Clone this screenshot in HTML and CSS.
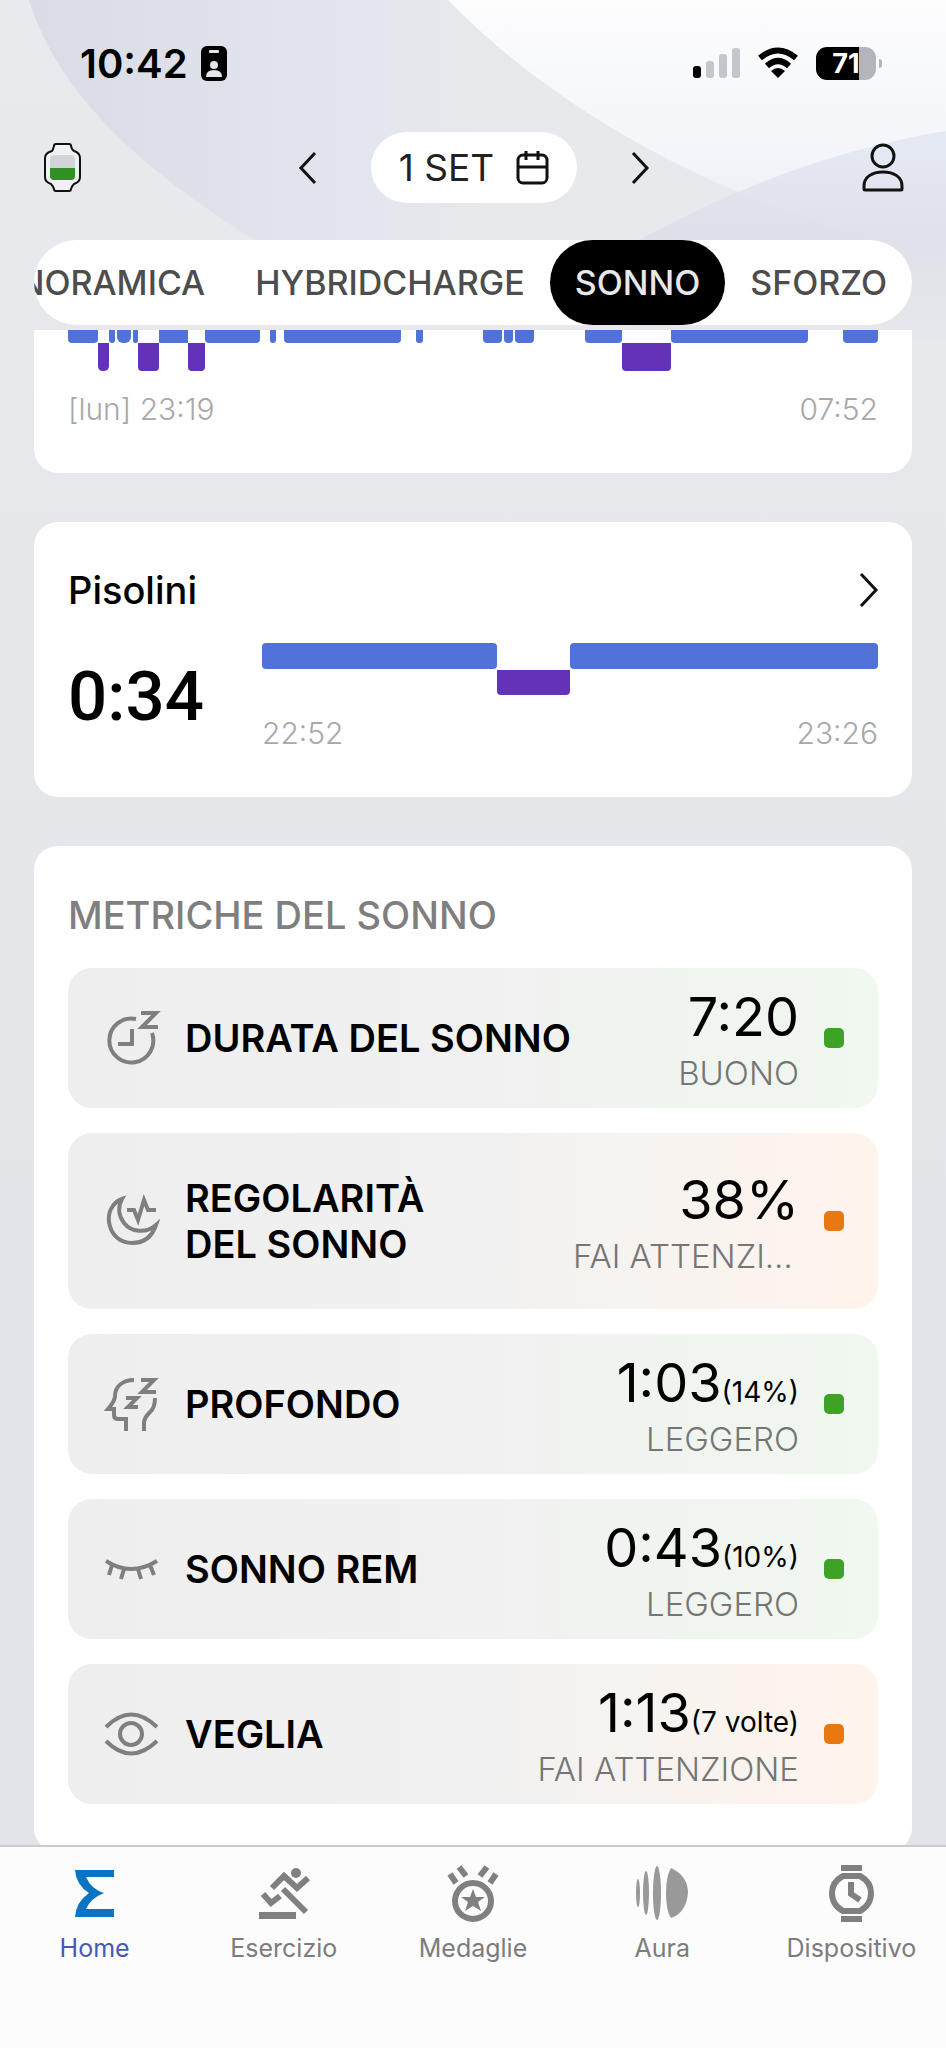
FILE: index.html
```html
<!DOCTYPE html>
<html lang="it">
<head>
    <meta charset="utf-8">
    <meta name="viewport" content="width=device-width, initial-scale=1">
    <title>Sonno</title>
    <link rel="stylesheet" href="styles.css">
</head>
<body>
<div class="app">

    <!-- Background curves -->
    <svg class="backdrop" viewBox="0 0 946 340" preserveAspectRatio="none" aria-hidden="true">
        <defs>
            <linearGradient id="fade-left" x1="0" x2="1" y1="0" y2="0">
                <stop offset="0" stop-color="#d9dce4"/>
                <stop offset="0.55" stop-color="#e3e6ee"/>
                <stop offset="0.75" stop-color="#e7e8ec"/>
                <stop offset="1" stop-color="#e8e9ec"/>
            </linearGradient>
            <linearGradient id="fade-top" x1="0" x2="0" y1="0" y2="1">
                <stop offset="0" stop-color="#fdfdfe"/>
                <stop offset="0.6" stop-color="#f3f5fa"/>
                <stop offset="1" stop-color="#e6e9f1"/>
            </linearGradient>
            <linearGradient id="fade-right" x1="0" x2="0" y1="0" y2="1">
                <stop offset="0" stop-color="#dfe4f0" stop-opacity="0.7"/>
                <stop offset="0.5" stop-color="#dcdfe8" stop-opacity="0.8"/>
                <stop offset="1" stop-color="#e6e7ec" stop-opacity="0.6"/>
            </linearGradient>
        </defs>
        <path fill="url(#fade-left)" d="M29 0C60 100 150 175 262 245H620V0Z"/>
        <path fill="url(#fade-top)" d="M448 0C560 115 730 210 946 258V0Z"/>
        <path fill="url(#fade-right)" d="M630 245C730 190 830 150 946 131V340H630Z"/>
    </svg>

    <header>
        <div class="status">
            <span class="clock">10:42</span>
            <svg width="26" height="35" viewBox="0 0 26 35" aria-hidden="true">
                <rect width="26" height="35" rx="6"/>
                <rect x="8" y="4" width="10" height="3" rx="1" fill="#e4e6ec"/>
                <circle cx="13" cy="19" r="4" fill="#e4e6ec"/>
                <path d="M5 31Q5 24 13 24Q21 24 21 31Z" fill="#e4e6ec"/>
            </svg>
            <div class="status-right">
                <svg width="47" height="30" viewBox="0 0 47 30" fill="#c5c6cb" aria-hidden="true">
                    <rect y="18" width="8" height="12" rx="3" fill="#000"/>
                    <rect x="13" y="13" width="8" height="17" rx="3"/>
                    <rect x="26" y="6" width="8" height="24" rx="3"/>
                    <rect x="39" width="8" height="30" rx="3"/>
                </svg>
                <svg width="40" height="30" viewBox="0 0 40 30" aria-hidden="true">
                    <path d="M2 10Q20 -5 38 10M9 18Q20 8 31 18" fill="none" stroke="#000" stroke-width="6"/>
                    <path d="M20 30L13 23Q20 17 27 23Z"/>
                </svg>
                <span class="battery">71</span>
            </div>
        </div>

        <div class="topbar">
            <button class="icon-btn" aria-label="Batteria orologio">
                <svg width="37" height="49" viewBox="0 0 37 49">
                    <path d="M8 8Q9 7 10 3Q10 1 12 1H25Q27 1 27 3Q28 7 30 8Q36 10 36 15V34Q36 39 30 41Q28 43 27 46Q27 48 25 48H12Q10 48 10 46Q9 43 7 41Q1 39 1 34V15Q1 10 8 8Z" fill="#f0f1f4" stroke="#111" stroke-width="2"/>
                    <path d="M6 25V16Q6 12 10 12H27Q31 12 31 16V25Z" fill="#d3d4da"/>
                    <path d="M6 25H31V33Q31 37 27 37H10Q6 37 6 33Z" fill="#2f9220"/>
                </svg>
            </button>
            <div class="date-nav">
                <button class="icon-btn" aria-label="Giorno precedente">
                    <svg width="17" height="32" viewBox="0 0 17 32"><path class="line" d="M16 1L2 16L16 31"/></svg>
                </button>
                <button class="date">1 SET
                    <svg width="33" height="33" viewBox="0 0 33 33" aria-hidden="true">
                        <rect class="line" x="2" y="4" width="29" height="28" rx="5"/>
                        <path class="line" d="M2 16H31M10 0V9M22 0V9"/>
                    </svg>
                </button>
                <button class="icon-btn" aria-label="Giorno successivo">
                    <svg width="17" height="32" viewBox="0 0 17 32"><path class="line" d="M1 1L15 16L1 31"/></svg>
                </button>
            </div>
            <button class="icon-btn profile" aria-label="Profilo">
                <svg width="42" height="48" viewBox="0 0 42 48">
                    <circle class="line" cx="21" cy="12" r="11"/>
                    <path class="line" d="M2 45V42C2 33 10 28 21 28S40 33 40 42V45Q40 46 39 46H3Q2 46 2 45Z"/>
                </svg>
            </button>
        </div>

        <nav class="tabs">
            <button>PANORAMICA</button>
            <button>HYBRIDCHARGE</button>
            <button class="active">SONNO</button>
            <button>SFORZO</button>
        </nav>
    </header>

    <main>
        <!-- Night chart, scrolled half out of view -->
        <section class="card night">
            <svg class="chart" height="41" viewBox="0 0 810 41" preserveAspectRatio="none" aria-hidden="true">
                <g class="light">
                    <rect x="0" y="-14" width="30" height="27" rx="4"/>
                    <rect x="41" y="-14" width="6" height="27" rx="3"/>
                    <rect x="49" y="-14" width="14" height="27" rx="6"/>
                    <rect x="65" y="-14" width="5" height="27" rx="2"/>
                    <rect x="91" y="-14" width="29" height="27" rx="1"/>
                    <rect x="137" y="-14" width="55" height="27" rx="4"/>
                    <rect x="202" y="-14" width="6" height="27" rx="3"/>
                    <rect x="216" y="-14" width="117" height="27" rx="4"/>
                    <rect x="348" y="-14" width="7" height="27" rx="3"/>
                    <rect x="415" y="-14" width="19" height="27" rx="4"/>
                    <rect x="436" y="-14" width="9" height="27" rx="4"/>
                    <rect x="447" y="-14" width="19" height="27" rx="4"/>
                    <rect x="517" y="-14" width="37" height="27" rx="4"/>
                    <rect x="603" y="-14" width="137" height="27" rx="4"/>
                    <rect x="775" y="-14" width="35" height="27" rx="4"/>
                </g>
                <g class="deep">
                    <path d="M30 13H41V36Q41 41 35 41Q30 41 30 36Z"/>
                    <path d="M70 13H91V37Q91 41 87 41H74Q70 41 70 37Z"/>
                    <path d="M120 13H137V37Q137 41 133 41H124Q120 41 120 37Z"/>
                    <path d="M554 13H603V37Q603 41 599 41H558Q554 41 554 37Z"/>
                </g>
            </svg>
            <div class="times"><span>[lun] 23:19</span><span>07:52</span></div>
        </section>

        <section class="card naps">
            <div class="card-head">
                <h2>Pisolini</h2>
                <button class="icon-btn" aria-label="Apri pisolini">
                    <svg width="19" height="34" viewBox="0 0 19 34"><path class="line" d="M2 1L17 17L2 33"/></svg>
                </button>
            </div>
            <div class="nap">
                <span class="nap-total">0:34</span>
                <div class="nap-chart">
                    <svg class="chart" height="52" viewBox="0 0 616 52" preserveAspectRatio="none" aria-hidden="true">
                        <g class="light">
                            <rect width="235" height="26" rx="4"/>
                            <rect x="308" width="308" height="26" rx="4"/>
                        </g>
                        <path class="deep" d="M235 27H308V48Q308 52 304 52H239Q235 52 235 48Z"/>
                    </svg>
                    <div class="times"><span>22:52</span><span>23:26</span></div>
                </div>
            </div>
        </section>

        <section class="card metrics">
            <h2>METRICHE DEL SONNO</h2>
            <ul>
                <li class="good">
                    <svg width="52" height="54" viewBox="0 0 52 54" aria-hidden="true">
                        <path d="M30 8A22 22 0 1 0 46 22M26 18V33H12M35 2H50L36 16H52"/>
                    </svg>
                    <span class="name">DURATA DEL SONNO</span>
                    <span class="result"><span class="value">7:20</span><span class="level">BUONO</span></span>
                    <i></i>
                </li>
                <li class="warn tall">
                    <svg width="52" height="54" viewBox="0 0 52 54" aria-hidden="true">
                        <path d="M16 5C5 9 2 20 3 28C5 42 15 49 26 49C38 49 46 43 50 31C40 40 25 38 18 29C12 21 12 12 16 5ZM21 16H28L32 26L38 6L42 16H50"/>
                    </svg>
                    <span class="name">REGOLARITÀ<br>DEL SONNO</span>
                    <span class="result"><span class="value">38%</span><span class="level">FAI ATTENZIONE</span></span>
                    <i></i>
                </li>
                <li class="good">
                    <svg width="52" height="54" viewBox="0 0 52 54" aria-hidden="true">
                        <path d="M28 3C16 3 9 10 9 19Q9 24 2 32H8V38Q8 42 12 42H20V54M49 21Q49 31 44 35Q38 41 38 46V54M35 3H48L36 15H50M20 21H31L22 30H32"/>
                    </svg>
                    <span class="name">PROFONDO</span>
                    <span class="result"><span class="value">1:03<small>(14%)</small></span><span class="level">LEGGERO</span></span>
                    <i></i>
                </li>
                <li class="good">
                    <svg width="52" height="54" viewBox="0 0 52 54" aria-hidden="true">
                        <path d="M0 19Q25 35 51 19M6 23L3 33M18 27L15 37M32 27L35 37M44 23L48 33"/>
                    </svg>
                    <span class="name">SONNO REM</span>
                    <span class="result"><span class="value">0:43<small>(10%)</small></span><span class="level">LEGGERO</span></span>
                    <i></i>
                </li>
                <li class="warn">
                    <svg width="52" height="54" viewBox="0 0 52 54" aria-hidden="true">
                        <path d="M0 20Q25 -5 51 20M0 34Q25 59 51 34"/>
                        <circle cx="25" cy="27" r="11"/>
                    </svg>
                    <span class="name">VEGLIA</span>
                    <span class="result"><span class="value">1:13<small>(7 volte)</small></span><span class="level">FAI ATTENZIONE</span></span>
                    <i></i>
                </li>
            </ul>
        </section>
    </main>

    <nav class="bottom-nav">
        <a href="#" class="active">
            <svg width="39" height="57" viewBox="0 -5 39 57" aria-hidden="true">
                <path fill="#0a74c4" d="M0 0H39V7H11Q16 19 29 23Q16 28 11 39H39V47H0Q1 32 14 23Q1 15 0 0Z"/>
            </svg>
            Home
        </a>
        <a href="#">
            <svg width="50" height="57" viewBox="0 -3 50 57" aria-hidden="true">
                <circle cx="37" cy="5" r="5" fill="#808080"/>
                <path d="M13 20L25 8L38 20L49 10M24 21L47 44M4 26L12 35L21 28" fill="none" stroke="#808080" stroke-width="6"/>
                <rect y="44" width="37" height="7" fill="#808080"/>
            </svg>
            Esercizio
        </a>
        <a href="#">
            <svg width="52" height="57" viewBox="-1 0 52 57" aria-hidden="true">
                <path d="M2 9L8 18M11 2L18 11M48 9L42 18M39 2L32 11" stroke="#808080" stroke-width="6"/>
                <circle cx="25" cy="36" r="18" fill="none" stroke="#808080" stroke-width="6"/>
                <path d="M25 24L28 32H37L30 37L33 46L25 41L17 46L20 37L13 32H22Z" fill="#808080"/>
            </svg>
            Medaglie
        </a>
        <a href="#">
            <svg width="52" height="57" viewBox="0 -2 52 57" fill="#999" aria-hidden="true">
                <ellipse cx="2" cy="26" rx="2" ry="14"/>
                <ellipse cx="10" cy="26" rx="3" ry="22"/>
                <ellipse cx="21" cy="26" rx="4" ry="27"/>
                <path d="M35 1Q52 9 52 26Q50 46 35 51Q30 44 30 26Q30 9 35 1Z"/>
            </svg>
            Aura
        </a>
        <a href="#">
            <svg width="45" height="57" viewBox="0 0 45 57" aria-hidden="true">
                <path d="M12 0H33V6H12ZM12 51H33V57H12Z" fill="#808080"/>
                <path d="M14 11H31Q42 17 42 28Q42 40 31 46H14Q3 40 3 28Q3 17 14 11Z M22 17V29L31 35" fill="none" stroke="#808080" stroke-width="6"/>
            </svg>
            Dispositivo
        </a>
    </nav>

</div>
</body>
</html>
```
FILE: styles.css
```css
* { box-sizing: border-box; }
body { margin: 0; font-family: Inter, sans-serif; color: #000; background: #e6e7eb; }
button { font: inherit; color: inherit; background: none; border: 0; padding: 0; cursor: pointer; }
h2, ul { margin: 0; padding: 0; }
svg { display: block; flex: none; overflow: visible; }

.app {
    position: relative;
    display: flex;
    flex-direction: column;
    height: 100vh;
    overflow: hidden;
    background: linear-gradient(#e9eaee, #e6e7eb 30%, #e2e3e9);
}
.backdrop { position: absolute; top: 0; left: 0; width: 100%; height: 340px; }
header { position: relative; }
.line { fill: none; stroke: #111; stroke-width: 3; }

/* Status bar */
.status { display: flex; align-items: center; gap: 13px; height: 88px; padding: 38px 64px 0 80px; }
.clock { font-size: 40px; font-weight: 600; }
.status-right { display: flex; align-items: center; gap: 18px; margin-left: auto; }
.battery {
    position: relative;
    width: 60px;
    margin-right: 6px;
    border-radius: 11px;
    background: linear-gradient(90deg, #000 71%, #b4b5ba 71%);
    color: #fff;
    font-size: 27px;
    font-weight: 700;
    line-height: 33px;
    text-align: center;
}
.battery::after {
    content: "";
    position: absolute;
    top: 12px;
    right: -6px;
    width: 3px;
    height: 9px;
    border-radius: 0 3px 3px 0;
    background: #b4b5ba;
}

/* Date row */
.topbar { display: grid; grid-template-columns: 1fr auto 1fr; align-items: center; padding: 44px 42px 37px 44px; }
.profile { justify-self: end; }
.topbar > .icon-btn:first-child { justify-self: start; }
.date-nav { display: flex; align-items: center; gap: 55px; }
.date {
    display: flex;
    align-items: center;
    gap: 22px;
    height: 71px;
    padding: 0 28px;
    border-radius: 36px;
    background: #fff;
    color: #222;
    font-size: 37px;
}

.tabs {
    display: flex;
    justify-content: flex-end;
    height: 85px;
    margin: 0 34px 5px;
    overflow: hidden;
    border-radius: 43px;
    background: #fff;
    color: #4d4d4d;
    font-size: 34px;
    font-weight: 500;
}
.tabs button { flex: none; padding: 0 25px; border-radius: 43px; }
.tabs .active { background: #000; color: #e8e8ec; }

/* Cards */
main {
    position: relative;
    flex: 1;
    display: flex;
    flex-direction: column;
    gap: 49px;
    min-height: 0;
    overflow: hidden;
    padding: 0 34px;
}
.card { flex: none; padding: 0 34px 48px; border-radius: 24px; background: #fff; }
.night { border-radius: 0 0 24px 24px; }
.chart { width: 100%; overflow: hidden; }
.light { fill: #5072d9; }
.deep { fill: #6232b8; }
.times {
    display: flex;
    justify-content: space-between;
    margin-top: 20px;
    color: #a8a8a8;
    font-size: 30px;
    font-weight: 300;
    line-height: 36px;
}

.night, .naps { padding-bottom: 46px; }
.naps { padding-top: 44px; }
.card-head { display: flex; align-items: center; justify-content: space-between; line-height: 48px; }
.card-head h2 { font-size: 38px; font-weight: 500; }
.nap { display: flex; align-items: center; margin-top: 29px; }
.nap-total { width: 194px; font-family: Roboto, sans-serif; font-size: 69px; font-weight: 500; line-height: 72px; }
.nap-chart { flex: 1; }

/* Sleep metrics */
.metrics { padding-top: 47px; }
.metrics h2 { color: #7f7f7f; font-size: 38px; font-weight: 500; line-height: 44px; }
.metrics ul { display: grid; grid-template-columns: minmax(0, 1fr); gap: 25px; margin-top: 31px; list-style: none; }
.metrics li {
    display: flex;
    align-items: center;
    min-height: 140px;
    padding: 0 34px 0 38px;
    border-radius: 24px;
}
.metrics li.tall { min-height: 176px; }
.metrics li svg { fill: none; stroke: #7f7f7f; stroke-width: 4; }
.good { background: linear-gradient(90deg, #eee, #f1f1f1 50%, #f0f5ef 80%, #f0f8ef); }
.warn { background: linear-gradient(90deg, #eee, #f1f1f1 50%, #f8f3ef 75%, #fff4ec); }
.name { flex: none; margin-left: 27px; font-size: 38px; font-weight: 600; line-height: 46px; }
.tall .name { width: 388px; }
.result { flex: 1; min-width: 0; display: flex; flex-direction: column; text-align: right; white-space: nowrap; }
.value { font-size: 54px; line-height: 70px; }
.value small { font-size: 28px; line-height: 28px; }
.level { overflow: hidden; text-overflow: ellipsis; color: #757575; font-size: 33px; font-weight: 300; line-height: 42px; }
.metrics i { flex: none; width: 20px; height: 20px; margin-left: 25px; border-radius: 5px; background: #3ea226; }
.warn i { background: #e97810; }

/* Bottom navigation */
.bottom-nav {
    position: relative;
    display: grid;
    grid-template-columns: repeat(5, 1fr);
    height: 203px;
    padding-top: 18px;
    border-top: 2px solid #cbcbcf;
    background: #fcfcfd;
}
.bottom-nav a {
    display: flex;
    flex-direction: column;
    align-items: center;
    gap: 11px;
    color: #7c7c7c;
    font-size: 25px;
    line-height: 30px;
    text-decoration: none;
}
.bottom-nav .active { color: #465ab4; }
```
